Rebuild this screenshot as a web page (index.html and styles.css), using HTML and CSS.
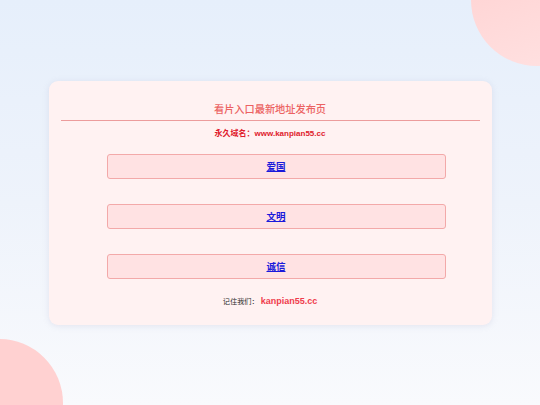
FILE: index.html
```html
<!DOCTYPE html>
<html lang="zh-CN">
<head>
<meta charset="utf-8">
<title>看片入口最新地址发布页</title>
<link rel="stylesheet" href="styles.css">
</head>
<body>
<div class="page">
  <div class="blob blob-tr"></div>
  <div class="blob blob-bl"></div>
  <main class="card">
    <h1 class="title">看片入口最新地址发布页</h1>
    <p class="domain">永久域名：<span class="latin">www.kanpian55.cc</span></p>
    <nav class="links">
      <div class="btn"><a href="#">爱国</a></div>
      <div class="btn"><a href="#">文明</a></div>
      <div class="btn"><a href="#">诚信</a></div>
    </nav>
    <p class="remember">记住我们：<span class="site">kanpian55.cc</span></p>
  </main>
</div>
</body>
</html>
```

FILE: styles.css
```css
html, body {
  margin: 0;
  padding: 0;
  overflow: hidden;
}
.page {
  width: 540px;
  height: 405px;
  box-sizing: border-box;
  padding-top: 81px;
  overflow: hidden;
  position: relative;
  background: linear-gradient(180deg, #e6effb 0%, #eef3fb 50%, #f9fafd 100%);
  font-family: "Liberation Sans", "Noto Sans CJK SC", sans-serif;
  display: flex;
  align-items: flex-start;
  justify-content: center;
}
.blob {
  position: absolute;
  border-radius: 50%;
}
.blob-tr {
  width: 132px;
  height: 132px;
  right: -63px;
  top: -66px;
  background: linear-gradient(160deg, #ffcfcf, #ffe2e2);
}
.blob-bl {
  width: 128px;
  height: 128px;
  left: -65px;
  bottom: -62px;
  background: #ffd1d1;
}
.card {
  position: relative;
  z-index: 1;
  width: 443px;
  box-sizing: border-box;
  padding: 20px 12px 15.5px;
  background: #fff2f2;
  border-radius: 9px;
  box-shadow: 0 1px 6px rgba(160, 160, 190, 0.22);
  display: flex;
  flex-direction: column;
}
.title {
  margin: 0;
  font-size: 10.2px;
  font-weight: 500;
  line-height: 16px;
  color: #ec6262;
  text-align: center;
  padding-bottom: 3px;
  border-bottom: 1.5px solid #ec9c9c;
  font-family: "Noto Sans CJK SC", sans-serif;
}
.domain {
  margin: 6px 0 0;
  font-size: 8px;
  line-height: 14px;
  font-weight: bold;
  color: #e01a2c;
  text-align: center;
}
.links {
  margin-top: 12.5px;
  padding: 0 34px 0 46px;
  display: flex;
  flex-direction: column;
  gap: 25px;
}
.btn {
  height: 25px;
  box-sizing: border-box;
  background: #ffe2e3;
  border: 1px solid #f3a9a9;
  border-radius: 3px;
  display: flex;
  align-items: center;
  justify-content: center;
}
.btn a {
  font-size: 9.5px;
  font-weight: bold;
  color: #1a1adb;
  text-decoration: underline;
  font-family: "Noto Sans CJK SC", sans-serif;
}
.remember {
  margin: 15.5px 0 0;
  text-align: center;
  font-size: 7.2px;
  line-height: 14px;
  color: #2a2a2a;
}
.site {
  font-size: 9px;
  font-weight: bold;
  color: #ef3c4c;
  margin-left: 2px;
}
```
